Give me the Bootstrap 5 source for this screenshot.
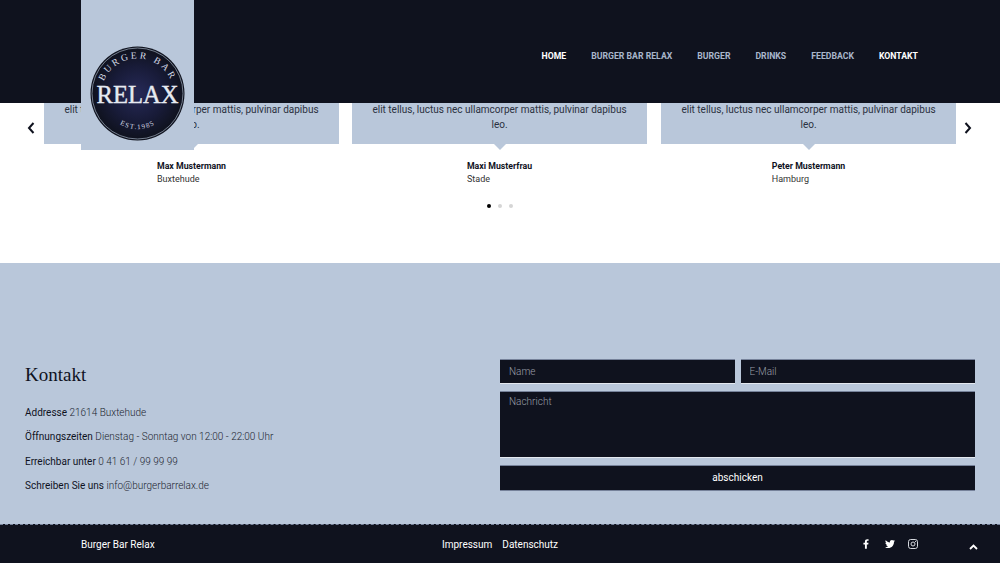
<!DOCTYPE html>
<html lang="de">
<head>
    <meta charset="UTF-8">
    <meta name="viewport" content="width=device-width, initial-scale=1.0">
    <title>Burger Bar Relax</title>
    <link href="https://cdn.jsdelivr.net/npm/bootstrap@5.3.0/dist/css/bootstrap.min.css" rel="stylesheet">
    <style>
        html, body { height: 100%; overflow: hidden; }
        body { font-family: Roboto, sans-serif; color: #0f121e; background: #fff; }

        /* Kopfzeile */
        .site-head { position: fixed; top: 0; left: 0; right: 0; height: 103px; background: #0f121e; padding: 0 82px 0 81px; z-index: 10; }
        .logo-panel { position: absolute; top: 0; left: 81px; width: 113px; height: 150px; background: #b9c7da; padding: 46px 0 0 9px; }
        .logo-panel svg { display: block; }
        .head-nav { gap: 25px; padding-top: 9px; }
        .head-nav a { font-size: 8.7px; font-weight: 700; line-height: 12px; color: #a9b6cb; text-decoration: none; text-transform: uppercase; }
        .head-nav a.on { color: #fff; }

        /* Stimmen */
        .voices { height: 263px; padding-top: 70px; }
        .voice-arrow { width: 44px; padding-top: 51px; flex: none; }
        .voice-arrow svg { display: block; }
        .arrow-prev { padding-left: 26px; }
        .arrow-next { padding-left: 7px; }
        .voice-row { gap: 13px; }
        .voice-item { width: 295px; flex: none; }
        .voice-item:last-child { margin-left: auto; }
        .voice-text { position: relative; height: 74px; background: #b9c7da; padding: 16.5px 15px 0; font-size: 10px; line-height: 15px; color: #2b3140; text-align: center; }
        .voice-text::after { content: ""; position: absolute; left: 50%; bottom: -6px; margin-left: -6px; border-left: 6px solid transparent; border-right: 6px solid transparent; border-top: 6px solid #b9c7da; }
        .voice-who { display: inline-block; text-align: left; margin-top: 16px; font-size: 9px; line-height: 12.5px; color: #333; }
        .voice-who b { display: block; font-size: 8.75px; font-weight: 700; color: #0f121e; }
        .voice-dots { gap: 7px; margin-top: 15px; }
        .voice-dots i { width: 4px; height: 4px; border-radius: 50%; background: #d5d5d5; }
        .voice-dots i.on { background: #000; }

        /* Kontakt */
        .contact { height: 261px; background: #b9c7da; padding: 96px 25px 0; }
        .contact-info, .contact-form { width: 475px; }
        .contact-info h2 { font-family: "Liberation Serif", serif; font-size: 19px; line-height: 24px; font-weight: 400; margin: 4px 0 14px; color: #0f121e; }
        .contact-info p { font-size: 10px; line-height: 24.4px; margin: 0; font-weight: 300; color: #20242f; }
        .contact-info p b { font-weight: 400; color: #0f121e; }
        .contact-form .form-control, .send-btn { background: #0f121e; border-radius: 0; border: 0; border-top: 1px solid #76829a; border-bottom: 1px solid #e4e9f0; color: #fff; font-size: 10px; font-weight: 300; padding: 0 9px; box-shadow: none; }
        .contact-form .form-control { height: 25px; min-height: 0; }
        .contact-form textarea.form-control { height: 67px; padding-top: 3px; line-height: 14px; resize: none; }
        .contact-form .form-control::placeholder { color: #9a9ea8; opacity: 1; }
        .form-pair { gap: 6px; margin-bottom: 7px; }
        .send-btn { display: block; width: 100%; height: 26px; font-weight: 400; padding-bottom: 1px; border-top: 1px solid #76829a; border-bottom: 1px solid #76829a; margin-top: 7px; }

        /* Fußzeile */
        .site-foot { height: 39px; background: #0f121e; border-top: 1px dashed #76829a; padding: 0 82px 0 81px; font-size: 10px; color: #fff; position: relative; }
        .site-foot a { color: #fff; text-decoration: none; }
        .foot-left { width: 361px; }
        .foot-links { gap: 10px; }
        .foot-social { gap: 13px; }
        .foot-social svg:first-child { margin-right: 3px; }
        .foot-up { position: absolute; right: 22px; top: 19px; display: block; line-height: 0; }
    </style>
</head>
<body>
    <header class="site-head d-flex align-items-center justify-content-end">
        <div class="logo-panel">
            <svg width="95" height="95" viewBox="0 0 95 95">
                <defs>
                    <radialGradient id="logoGlow">
                        <stop offset="0" stop-color="#262a58"/>
                        <stop offset="0.6" stop-color="#181b38"/>
                        <stop offset="1" stop-color="#0f121e"/>
                    </radialGradient>
                    <path id="arcTop" d="M11 49a36.5 36.5 0 0 1 73 0"/>
                    <path id="arcBottom" d="M16 62a34 34 0 0 0 63 0"/>
                </defs>
                <circle cx="47.5" cy="47.5" r="47" fill="#0f121e"/>
                <circle cx="47.5" cy="47.5" r="45.5" fill="url(#logoGlow)" stroke="#b9c7da" stroke-width="0.6"/>
                <text font-family="Liberation Serif" font-size="9.5" fill="#d5dbe6" letter-spacing="2.6" text-anchor="middle"><textPath href="#arcTop" startOffset="50%">BURGER BAR</textPath></text>
                <text x="47.5" y="57" font-family="Liberation Serif" font-size="25" fill="#e6eaf1" stroke="#e6eaf1" stroke-width="0.4" text-anchor="middle" textLength="82" lengthAdjust="spacingAndGlyphs">RELAX</text>
                <text font-family="Liberation Serif" font-size="7" fill="#d5dbe6" letter-spacing="1.2" text-anchor="middle"><textPath href="#arcBottom" startOffset="50%">EST.1985</textPath></text>
            </svg>
        </div>
        <nav class="head-nav d-flex">
            <a class="on" href="#">Home</a>
            <a href="#">Burger Bar Relax</a>
            <a href="#">Burger</a>
            <a href="#">Drinks</a>
            <a href="#">Feedback</a>
            <a class="on" href="#">Kontakt</a>
        </nav>
    </header>

    <section class="voices">
        <div class="d-flex">
            <div class="voice-arrow arrow-prev">
                <svg width="10" height="14" viewBox="0 0 10 14"><path d="M7.5 2 3 7l4.5 5" fill="none" stroke="#0f121e" stroke-width="2"/></svg>
            </div>
            <div class="voice-row flex-fill d-flex">
                <div class="voice-item text-center">
                    <div class="voice-text">Lorem ipsum dolor sit amet, consectetur adipiscing<br>elit tellus, luctus nec ullamcorper mattis, pulvinar dapibus leo.</div>
                    <div class="voice-who"><b>Max Mustermann</b>Buxtehude</div>
                </div>
                <div class="voice-item text-center">
                    <div class="voice-text">Lorem ipsum dolor sit amet, consectetur adipiscing<br>elit tellus, luctus nec ullamcorper mattis, pulvinar dapibus leo.</div>
                    <div class="voice-who"><b>Maxi Musterfrau</b>Stade</div>
                </div>
                <div class="voice-item text-center">
                    <div class="voice-text">Lorem ipsum dolor sit amet, consectetur adipiscing<br>elit tellus, luctus nec ullamcorper mattis, pulvinar dapibus leo.</div>
                    <div class="voice-who"><b>Peter Mustermann</b>Hamburg</div>
                </div>
            </div>
            <div class="voice-arrow arrow-next">
                <svg width="10" height="14" viewBox="0 0 10 14"><path d="M2.5 2 7 7l-4.5 5" fill="none" stroke="#0f121e" stroke-width="2"/></svg>
            </div>
        </div>
        <div class="voice-dots d-flex justify-content-center"><i class="on"></i><i></i><i></i></div>
    </section>

    <section class="contact d-flex justify-content-between">
        <div class="contact-info">
            <h2>Kontakt</h2>
            <p><b>Addresse</b> 21614 Buxtehude</p>
            <p><b>Öffnungszeiten</b> Dienstag - Sonntag von 12:00 - 22:00 Uhr</p>
            <p><b>Erreichbar unter</b> 0 41 61 / 99 99 99</p>
            <p><b>Schreiben Sie uns</b> info@burgerbarrelax.de</p>
        </div>
        <form class="contact-form">
            <div class="form-pair d-flex">
                <input class="form-control" type="text" placeholder="Name">
                <input class="form-control" type="text" placeholder="E-Mail">
            </div>
            <textarea class="form-control" placeholder="Nachricht"></textarea>
            <button class="send-btn" type="button">abschicken</button>
        </form>
    </section>

    <footer class="site-foot d-flex align-items-center justify-content-between">
        <div class="foot-left">Burger Bar Relax</div>
        <div class="foot-links d-flex flex-fill">
            <a href="#">Impressum</a>
            <a href="#">Datenschutz</a>
        </div>
        <div class="foot-social d-flex align-items-center">
            <svg width="6" height="10" viewBox="0 0 320 512"><path fill="#fff" d="M279.14 288l14.22-92.66h-88.91v-60.13c0-25.35 12.42-50.06 52.24-50.06h40.42V6.26S260.43 0 225.36 0c-73.22 0-121.08 44.38-121.08 124.72v70.62H22.89V288h81.39v224h100.17V288z"/></svg>
            <svg width="10" height="10" viewBox="0 0 512 512"><path fill="#fff" d="M459.37 151.716c.325 4.548.325 9.097.325 13.645 0 138.72-105.583 298.558-298.558 298.558-59.452 0-114.68-17.219-161.137-47.106 8.447.974 16.568 1.299 25.34 1.299 49.055 0 94.213-16.568 130.274-44.832-46.132-.975-84.792-31.188-98.112-72.772 6.498.974 12.995 1.624 19.818 1.624 9.421 0 18.843-1.3 27.614-3.573-48.081-9.747-84.143-51.98-84.143-102.985v-1.299c13.969 7.797 30.214 12.67 47.431 13.319-28.264-18.843-46.781-51.005-46.781-87.391 0-19.492 5.197-37.36 14.294-52.954 51.655 63.675 129.3 105.258 216.365 109.807-1.624-7.797-2.599-15.918-2.599-24.04 0-57.828 46.782-104.934 104.934-104.934 30.213 0 57.502 12.67 76.67 33.137 23.715-4.548 46.456-13.32 66.599-25.34-7.798 24.366-24.366 44.833-46.132 57.827 21.117-2.273 41.584-8.122 60.426-16.243-14.292 20.791-32.161 39.308-52.628 54.253z"/></svg>
            <svg width="10" height="10" viewBox="0 0 10 10"><rect x="0.5" y="0.5" width="9" height="9" rx="2.2" fill="none" stroke="#d5d8de"/><circle cx="5" cy="5" r="2" fill="none" stroke="#d5d8de"/><circle cx="7.6" cy="2.4" r="0.6" fill="#d5d8de"/></svg>
        </div>
        <a class="foot-up" href="#"><svg width="9" height="6" viewBox="0 0 9 6"><path d="M1 5l3.5-3.5L8 5" fill="none" stroke="#fff" stroke-width="1.8"/></svg></a>
    </footer>
</body>
</html>
